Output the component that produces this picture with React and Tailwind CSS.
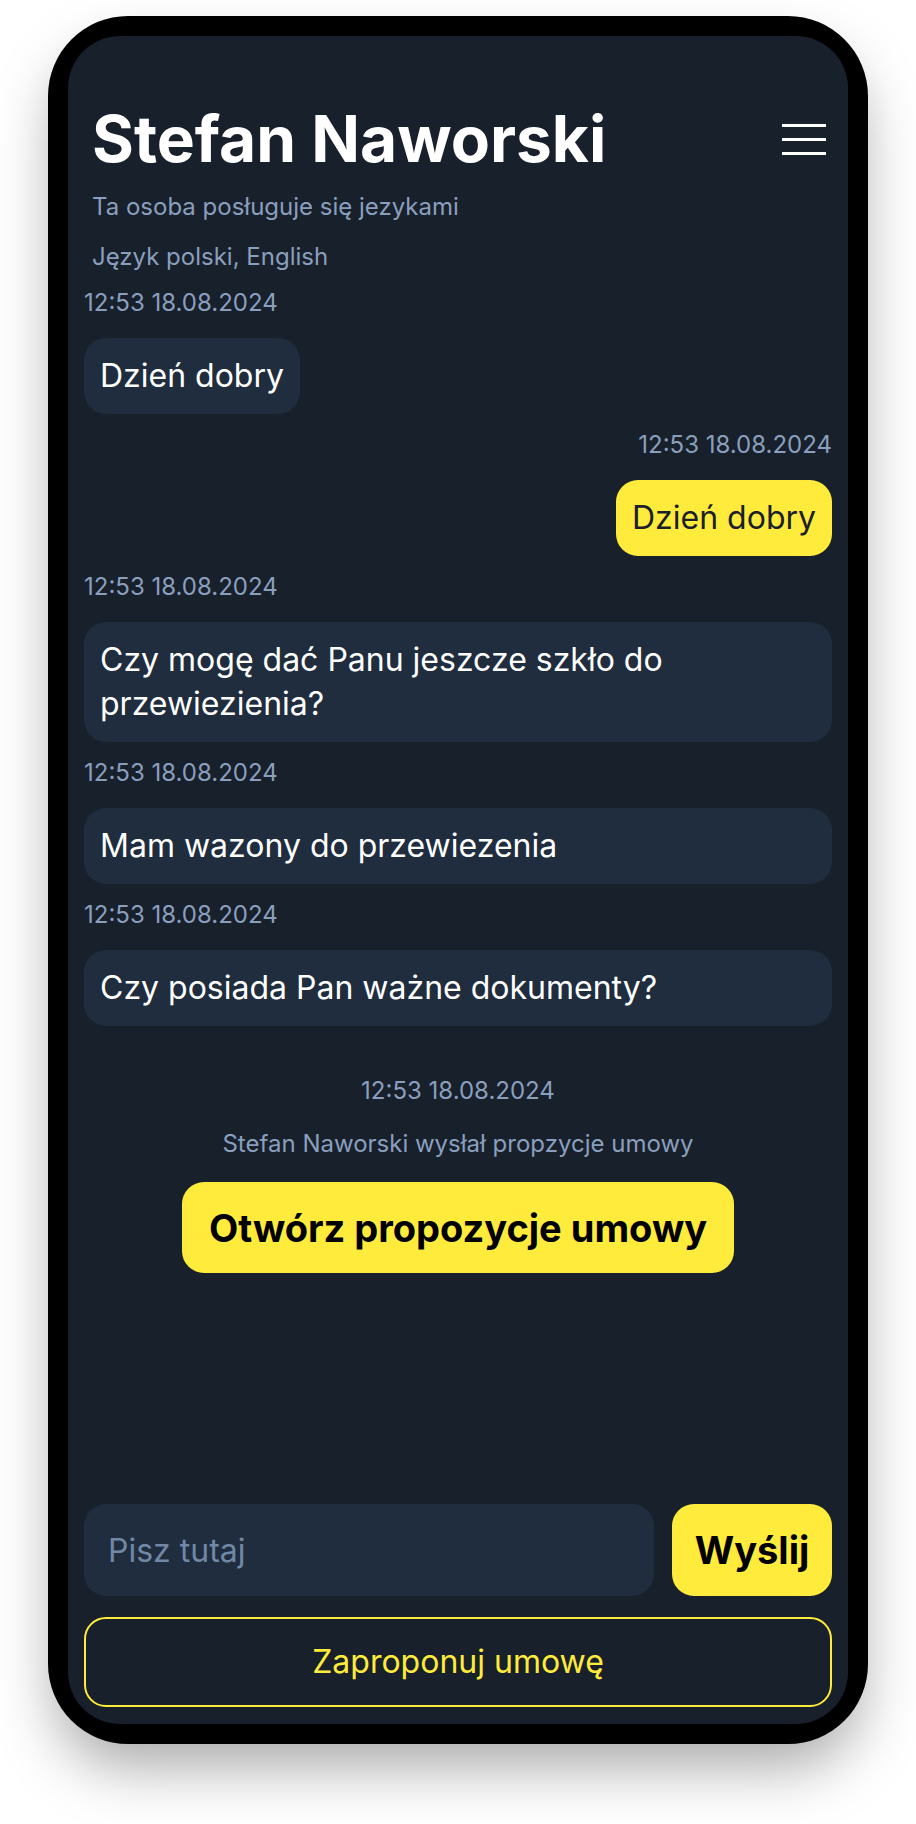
const messages = [
  { id: 1, time: '12:53 18.08.2024', text: 'Dzień dobry', me: false, fit: true },
  { id: 2, time: '12:53 18.08.2024', text: 'Dzień dobry', me: true, fit: true },
  { id: 3, time: '12:53 18.08.2024', text: 'Czy mogę dać Panu jeszcze szkło do przewiezienia?', me: false },
  { id: 4, time: '12:53 18.08.2024', text: 'Mam wazony do przewiezenia', me: false },
  { id: 5, time: '12:53 18.08.2024', text: 'Czy posiada Pan ważne dokumenty?', me: false },
]

export default function App() {
  return (
    <div className="min-h-screen bg-white pt-4" style={{ fontFamily: 'Inter, "Noto Sans", sans-serif' }}>
      <div className="mx-auto h-[1728px] w-[820px] rounded-[80px] bg-black p-5 shadow-[0_30px_60px_-8px_rgba(0,0,0,0.35)]">
        <div className="flex h-full flex-col rounded-[52px] bg-[#18202b]">

          {/* Header */}
          <div className="pl-6 pr-[22px] pt-[71px]">
            <div className="flex items-center justify-between">
              <h1 className="text-[64px] font-bold leading-[64px] text-white">Stefan Naworski</h1>
              <button className="flex w-[44px] flex-col gap-[11px]">
                <span className="h-[3px] w-full bg-white" />
                <span className="h-[3px] w-full bg-white" />
                <span className="h-[3px] w-full bg-white" />
              </button>
            </div>
            <p className="mt-[21px] text-[24px] leading-[30px] text-[#8a9fbd]">Ta osoba posługuje się jezykami</p>
            <p className="mt-5 text-[24px] leading-[30px] text-[#8a9fbd]">Język polski, English</p>
          </div>

          {/* Wiadomości */}
          <div className="px-4">
            {messages.map(msg => (
              <div key={msg.id} className="mt-4">
                <p className={`mb-5 text-[24px] leading-[30px] text-[#8a9fbd] ${msg.me ? 'text-right' : ''}`}>
                  {msg.time}
                </p>
                <div className={`flex ${msg.me ? 'justify-end' : 'justify-start'}`}>
                  <div
                    className={`rounded-[22px] p-4 text-[32px] leading-[44px] ${msg.fit ? 'w-fit' : 'w-full'} ${
                      msg.me ? 'bg-[#ffeb3b] text-[#1a202c]' : 'bg-[#1f2d3e] text-white'
                    }`}
                  >
                    {msg.text}
                  </div>
                </div>
              </div>
            ))}

            {/* Propozycja umowy */}
            <div className="mt-[50px] flex flex-col items-center">
              <p className="text-[24px] leading-[30px] text-[#8a9fbd]">12:53 18.08.2024</p>
              <p className="mt-[23px] text-[24px] leading-[30px] text-[#8a9fbd]">Stefan Naworski wysłał propzycje umowy</p>
              <button className="mt-[23px] flex h-[91px] items-center rounded-[22px] bg-[#ffeb3b] px-[27px] text-[38px] font-bold leading-[48px] text-black">
                Otwórz propozycje umowy
              </button>
            </div>
          </div>

          <div className="flex-1" />

          {/* Input */}
          <div className="px-4 pb-[17px]">
            <div className="flex gap-[18px]">
              <input
                placeholder="Pisz tutaj"
                className="h-[92px] min-w-0 flex-1 rounded-[22px] bg-[#1f2d3e] pl-6 text-[32px] text-white outline-none placeholder:text-[#7088a6]"
              />
              <button className="h-[92px] w-[160px] rounded-[22px] bg-[#ffeb3b] text-[38px] font-bold text-black">
                Wyślij
              </button>
            </div>
            <button className="mt-[21px] h-[90px] w-full rounded-[22px] border-2 border-[#ffeb3b] text-[32px] text-[#ffeb3b]">
              Zaproponuj umowę
            </button>
          </div>
        </div>
      </div>
    </div>
  )
}
